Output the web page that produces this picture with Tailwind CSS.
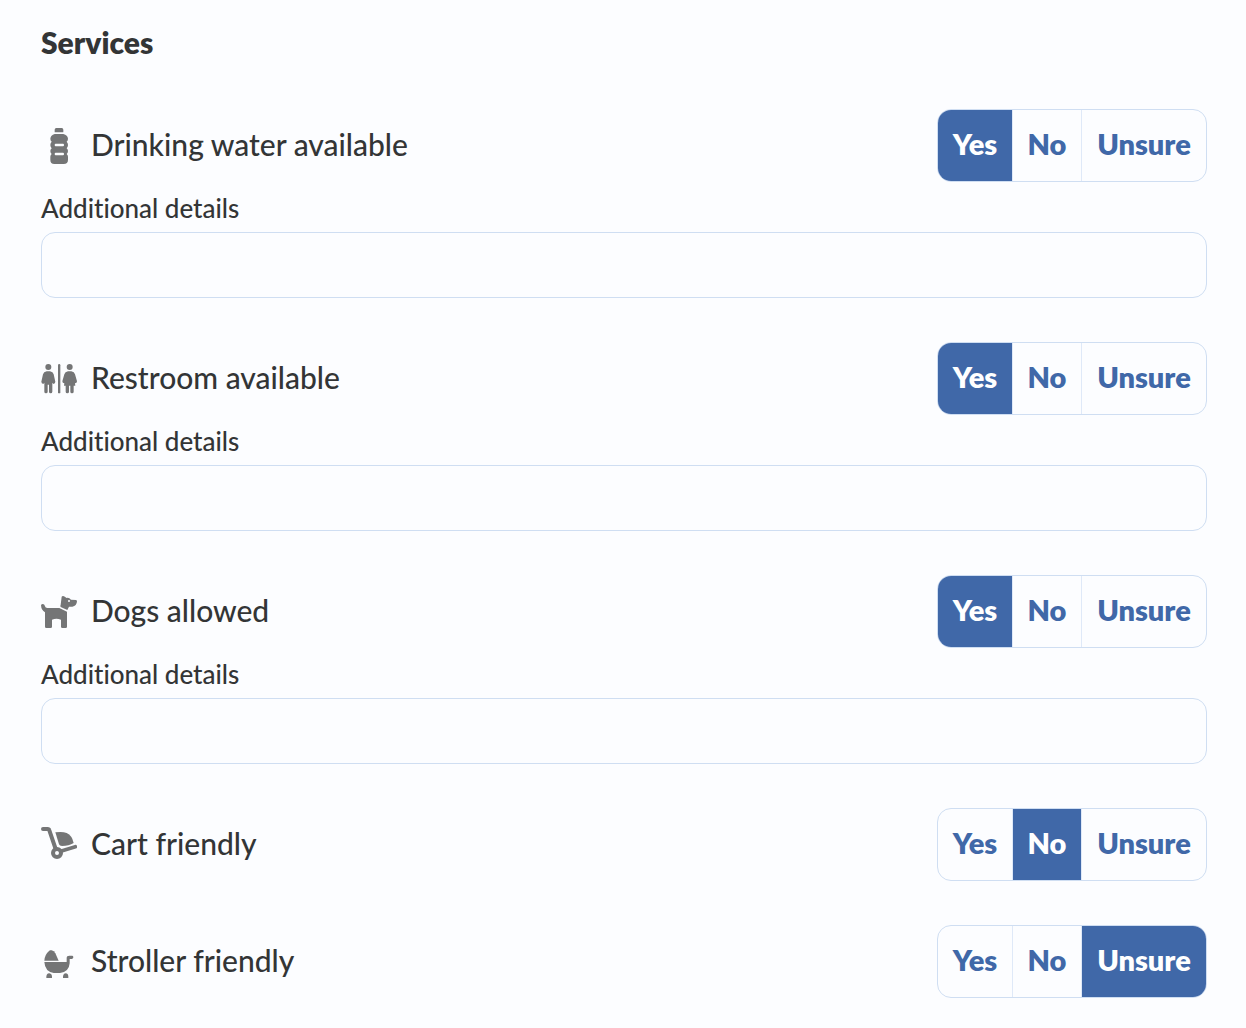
<!DOCTYPE html>
<html lang="en">
<head>
    <meta charset="UTF-8">
    <meta name="viewport" content="width=device-width, initial-scale=1.0">
    <title>Services</title>
    <script src="https://cdn.jsdelivr.net/npm/@tailwindcss/browser@4"></script>
</head>
<body class="bg-[#fcfdff] font-['Lato',sans-serif] text-[#333536] [font-variant-ligatures:none]">
    <main class="pt-[22px] pr-[39px] pb-7 pl-[41px]">
        <h1 class="text-[30px] leading-10 font-extrabold">Services</h1>

        <form class="mt-[47px] flex flex-col gap-11">
            <!-- Drinking water -->
            <section>
                <div class="flex items-center justify-between">
                    <h2 id="waterLabel" class="flex items-center gap-[14px] text-[30px] leading-10 font-medium">
                        <svg class="size-9 shrink-0 fill-[#747576]" viewBox="21 21 108 108" aria-hidden="true">
                            <path d="M67 21h16q5 0 5 5v8H62v-8q0-5 5-5z"/>
                            <path fill-rule="evenodd" d="M62 39h26q13 3 14 14q0 6-4 9q4 4 4 10q0 6-4 10q4 4 4 8q0 6-4 9q4 3 4 8v9q0 13-13 13H61q-12 0-12-13v-9q0-5 4-8q-4-3-4-9q0-4 4-8q-4-4-4-10q0-6 4-10q-4-3-4-9q1-11 13-14zM65 68q-3 0-3 4t3 4h22q3 0 3-4t-3-4zM65 95q-3 0-3 4t3 4h22q3 0 3-4t-3-4z"/>
                        </svg>
                        <span class="pb-1">Drinking water available</span>
                    </h2>
                    <div role="radiogroup" aria-labelledby="waterLabel" class="relative flex h-[73px] divide-x divide-[#dfe9f8] overflow-hidden rounded-[14px] border border-[#cfdef2] text-[29px] font-extrabold text-[#4068a8]">
                        <label class="flex w-[75px] cursor-pointer items-center justify-center pb-1 has-checked:bg-[#4068a8] has-checked:text-white"><input type="radio" name="water" class="sr-only" checked>Yes</label>
                        <label class="flex w-[69px] cursor-pointer items-center justify-center pb-1 has-checked:bg-[#4068a8] has-checked:text-white"><input type="radio" name="water" class="sr-only">No</label>
                        <label class="flex w-[124px] cursor-pointer items-center justify-center pb-1 has-checked:bg-[#4068a8] has-checked:text-white"><input type="radio" name="water" class="sr-only">Unsure</label>
                    </div>
                </div>
                <label for="waterDetails" class="mt-[11px] mb-[9px] block text-[26px] leading-[30px] font-medium">Additional details</label>
                <input id="waterDetails" type="text" class="block h-[66px] w-full rounded-[14px] border border-[#cfdef2] px-4 text-[26px]">
            </section>

            <!-- Restroom -->
            <section>
                <div class="flex items-center justify-between">
                    <h2 id="restroomLabel" class="flex items-center gap-[14px] text-[30px] leading-10 font-medium">
                        <svg class="size-9 shrink-0 fill-[#747576]" viewBox="21 21 108 108" aria-hidden="true">
                            <circle cx="43" cy="39" r="9"/>
                            <circle cx="107" cy="39" r="9"/>
                            <rect x="72" y="30" width="7" height="88" rx="3.5"/>
                            <path d="M38 52h10q9 1 11 9l5 22q0 6-6 7l-3-4v27q0 5-5 5t-5-5V92h-4v21q0 5-5 5t-5-5V86l-3 4q-6-1-6-7l5-22q2-8 11-9z"/>
                            <path d="M102 52h10q9 1 11 9l6 21q0 6-6 6l1 7h-5v18q0 5-5 5t-5-5V95h-4v18q0 5-5 5t-5-5V95h-5l1-7q-6 0-6-6l6-21q2-8 11-9z"/>
                        </svg>
                        <span class="pb-1">Restroom available</span>
                    </h2>
                    <div role="radiogroup" aria-labelledby="restroomLabel" class="relative flex h-[73px] divide-x divide-[#dfe9f8] overflow-hidden rounded-[14px] border border-[#cfdef2] text-[29px] font-extrabold text-[#4068a8]">
                        <label class="flex w-[75px] cursor-pointer items-center justify-center pb-1 has-checked:bg-[#4068a8] has-checked:text-white"><input type="radio" name="restroom" class="sr-only" checked>Yes</label>
                        <label class="flex w-[69px] cursor-pointer items-center justify-center pb-1 has-checked:bg-[#4068a8] has-checked:text-white"><input type="radio" name="restroom" class="sr-only">No</label>
                        <label class="flex w-[124px] cursor-pointer items-center justify-center pb-1 has-checked:bg-[#4068a8] has-checked:text-white"><input type="radio" name="restroom" class="sr-only">Unsure</label>
                    </div>
                </div>
                <label for="restroomDetails" class="mt-[11px] mb-[9px] block text-[26px] leading-[30px] font-medium">Additional details</label>
                <input id="restroomDetails" type="text" class="block h-[66px] w-full rounded-[14px] border border-[#cfdef2] px-4 text-[26px]">
            </section>

            <!-- Dogs -->
            <section>
                <div class="flex items-center justify-between">
                    <h2 id="dogsLabel" class="flex items-center gap-[14px] text-[30px] leading-10 font-medium">
                        <svg class="size-9 shrink-0 fill-[#747576]" viewBox="21 21 108 108" aria-hidden="true">
                            <path d="M21 55q1-4 6-4q5 1 6 7q1 5 7 5h36l23 11v45q0 4-4 4H85q-4 0-4-4V98q-14-5-27 0v21q0 4-4 4H37q-4 0-4-4V76q-11-6-12-21z"/>
                            <path fill-rule="evenodd" d="M83 29q3-4 7-1l8 5q7-2 13 5l15 1q3 1 3 4q-1 15-14 16h-10l-5 10l-20-9q-2-3 0-7zM105 39a3 3 0 1 0 0 6a3 3 0 0 0 0-6z"/>
                        </svg>
                        <span class="pb-1">Dogs allowed</span>
                    </h2>
                    <div role="radiogroup" aria-labelledby="dogsLabel" class="relative flex h-[73px] divide-x divide-[#dfe9f8] overflow-hidden rounded-[14px] border border-[#cfdef2] text-[29px] font-extrabold text-[#4068a8]">
                        <label class="flex w-[75px] cursor-pointer items-center justify-center pb-1 has-checked:bg-[#4068a8] has-checked:text-white"><input type="radio" name="dogs" class="sr-only" checked>Yes</label>
                        <label class="flex w-[69px] cursor-pointer items-center justify-center pb-1 has-checked:bg-[#4068a8] has-checked:text-white"><input type="radio" name="dogs" class="sr-only">No</label>
                        <label class="flex w-[124px] cursor-pointer items-center justify-center pb-1 has-checked:bg-[#4068a8] has-checked:text-white"><input type="radio" name="dogs" class="sr-only">Unsure</label>
                    </div>
                </div>
                <label for="dogsDetails" class="mt-[11px] mb-[9px] block text-[26px] leading-[30px] font-medium">Additional details</label>
                <input id="dogsDetails" type="text" class="block h-[66px] w-full rounded-[14px] border border-[#cfdef2] px-4 text-[26px]">
            </section>

            <!-- Cart -->
            <section class="flex items-center justify-between">
                <h2 id="cartLabel" class="flex items-center gap-[14px] text-[30px] leading-10 font-medium">
                    <svg class="size-9 shrink-0 fill-[#747576]" viewBox="21 21 108 108" aria-hidden="true">
                        <path d="M27 27h14q4 0 5 4l19 56" fill="none" stroke="#747576" stroke-width="12" stroke-linecap="round" stroke-linejoin="round"/>
                        <path d="M80 94l44-14" fill="none" stroke="#747576" stroke-width="11" stroke-linecap="round"/>
                        <circle cx="69" cy="99" r="12" fill="none" stroke="#747576" stroke-width="12"/>
                        <path d="M64 37q22-3 34 2q16 7 21 30q-14 9-35 9q-7 0-9-5z"/>
                    </svg>
                    <span class="pb-1">Cart friendly</span>
                </h2>
                <div role="radiogroup" aria-labelledby="cartLabel" class="relative flex h-[73px] divide-x divide-[#dfe9f8] overflow-hidden rounded-[14px] border border-[#cfdef2] text-[29px] font-extrabold text-[#4068a8]">
                    <label class="flex w-[75px] cursor-pointer items-center justify-center pb-1 has-checked:bg-[#4068a8] has-checked:text-white"><input type="radio" name="cart" class="sr-only">Yes</label>
                    <label class="flex w-[69px] cursor-pointer items-center justify-center pb-1 has-checked:bg-[#4068a8] has-checked:text-white"><input type="radio" name="cart" class="sr-only" checked>No</label>
                    <label class="flex w-[124px] cursor-pointer items-center justify-center pb-1 has-checked:bg-[#4068a8] has-checked:text-white"><input type="radio" name="cart" class="sr-only">Unsure</label>
                </div>
            </section>

            <!-- Stroller -->
            <section class="flex items-center justify-between">
                <h2 id="strollerLabel" class="flex items-center gap-[14px] text-[30px] leading-10 font-medium">
                    <svg class="size-9 shrink-0 fill-[#747576]" viewBox="21 18 108 108" aria-hidden="true">
                        <path d="M31 68q1-18 14-29l3-2h5q7 2 11 9l10 22z"/>
                        <path d="M31 72h67V60q0-7 8-7h9q3 1 3 5t-4 5h-7v13q-2 26-29 29H59q-26-4-28-33z"/>
                        <path d="M37 120q-1-14 9-14q9 1 8 14zM87 120q-1-14 9-14q8 1 7 14z"/>
                    </svg>
                    <span class="pb-1">Stroller friendly</span>
                </h2>
                <div role="radiogroup" aria-labelledby="strollerLabel" class="relative flex h-[73px] divide-x divide-[#dfe9f8] overflow-hidden rounded-[14px] border border-[#cfdef2] text-[29px] font-extrabold text-[#4068a8]">
                    <label class="flex w-[75px] cursor-pointer items-center justify-center pb-1 has-checked:bg-[#4068a8] has-checked:text-white"><input type="radio" name="stroller" class="sr-only">Yes</label>
                    <label class="flex w-[69px] cursor-pointer items-center justify-center pb-1 has-checked:bg-[#4068a8] has-checked:text-white"><input type="radio" name="stroller" class="sr-only">No</label>
                    <label class="flex w-[124px] cursor-pointer items-center justify-center pb-1 has-checked:bg-[#4068a8] has-checked:text-white"><input type="radio" name="stroller" class="sr-only" checked>Unsure</label>
                </div>
            </section>
        </form>
    </main>
</body>
</html>
